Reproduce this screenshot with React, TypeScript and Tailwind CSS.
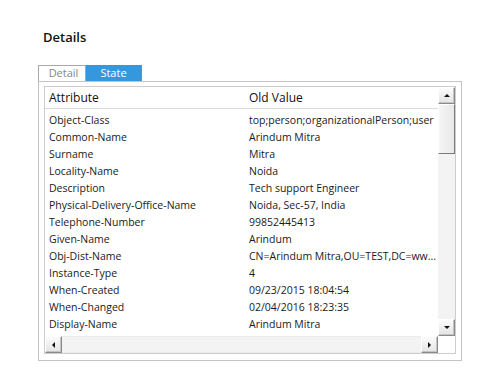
import React from "react";

const rows: [string, string][] = [
  ["Object-Class", "top;person;organizationalPerson;user"],
  ["Common-Name", "Arindum Mitra"],
  ["Surname", "Mitra"],
  ["Locality-Name", "Noida"],
  ["Description", "Tech support Engineer"],
  ["Physical-Delivery-Office-Name", "Noida, Sec-57, India"],
  ["Telephone-Number", "99852445413"],
  ["Given-Name", "Arindum"],
  ["Obj-Dist-Name", "CN=Arindum Mitra,OU=TEST,DC=ww..."],
  ["Instance-Type", "4"],
  ["When-Created", "09/23/2015 18:04:54"],
  ["When-Changed", "02/04/2016 18:23:35"],
  ["Display-Name", "Arindum Mitra"],
];

const ScrollButton = ({ dir }: { dir: "up" | "down" | "left" | "right" }) => {
  const points = {
    up: "2,6 8,6 5,3",
    down: "2,3 8,3 5,6",
    left: "6,2 6,8 3,5",
    right: "3,2 3,8 6,5",
  }[dir];
  return (
    <div className="w-[17px] h-[17px] shrink-0 flex items-center justify-center bg-gradient-to-b from-[#fbfbfb] to-[#e4e4e4] border border-t-white border-l-white border-r-[#8a8a8a] border-b-[#8a8a8a] shadow-[inset_-1px_-1px_0_#c4c4c4]">
      <svg width="9" height="9" viewBox="0 0 9 9">
        <polygon points={points} fill="#111" />
      </svg>
    </div>
  );
};

const App = () => {
  return (
    <div className="w-[500px] h-[390px] bg-white pl-[38px] pt-[28px] font-['Open_Sans',sans-serif] text-[#1a1a1a]">
      <div className="pl-[5px] text-[13px] leading-[18px] font-semibold text-[#111]">Details</div>

      <div className="mt-[19px] flex h-[16px]">
        <div className="w-[48px] border border-b-0 border-[#a8a8a8] pl-[3px] text-[11px] leading-[14px] text-[#888] text-center">
          Detail
        </div>
        <div className="w-[56px] bg-[#3598dc] border-r border-[#888] text-[11px] leading-[16px] text-white text-center">
          State
        </div>
      </div>

      <div className="w-[424px] h-[280px] border border-[#c4c4c4] pt-[4px] pl-[5px] pr-[5px]">
        <div className="w-[412px] h-[268px] border border-[#cdcdcd] flex flex-col">
          <div className="flex flex-1 min-h-0">
            <div className="flex-1 overflow-hidden">
              <div className="flex h-[22px] items-center border-b border-[#dcdcdc] text-[12px] text-[#111]">
                <div className="w-[204px] pl-[4px]">Attribute</div>
                <div>Old Value</div>
              </div>
              <div className="pt-[3px]">
                {rows.map(([k, v]) => (
                  <div key={k} className="flex h-[17px] items-center text-[10.5px] whitespace-nowrap">
                    <div className="w-[204px] pl-[4px] shrink-0">{k}</div>
                    <div>{v}</div>
                  </div>
                ))}
              </div>
            </div>
            <div className="w-[17px] flex flex-col bg-[#f3f3f3]">
              <ScrollButton dir="up" />
              <div className="h-[50px] bg-gradient-to-r from-[#f6f6f6] to-[#e8e8e8] border border-t-white border-l-white border-r-[#7a7a7a] border-b-[#7a7a7a]" />
              <div className="flex-1" />
              <ScrollButton dir="down" />
            </div>
          </div>
          <div className="flex h-[17px]">
            <ScrollButton dir="left" />
            <div className="flex-1 bg-[#f3f3f3] border-y border-[#ececec]" />
            <ScrollButton dir="right" />
            <div className="w-[17px] bg-white" />
          </div>
        </div>
      </div>
    </div>
  );
};

export default App;
